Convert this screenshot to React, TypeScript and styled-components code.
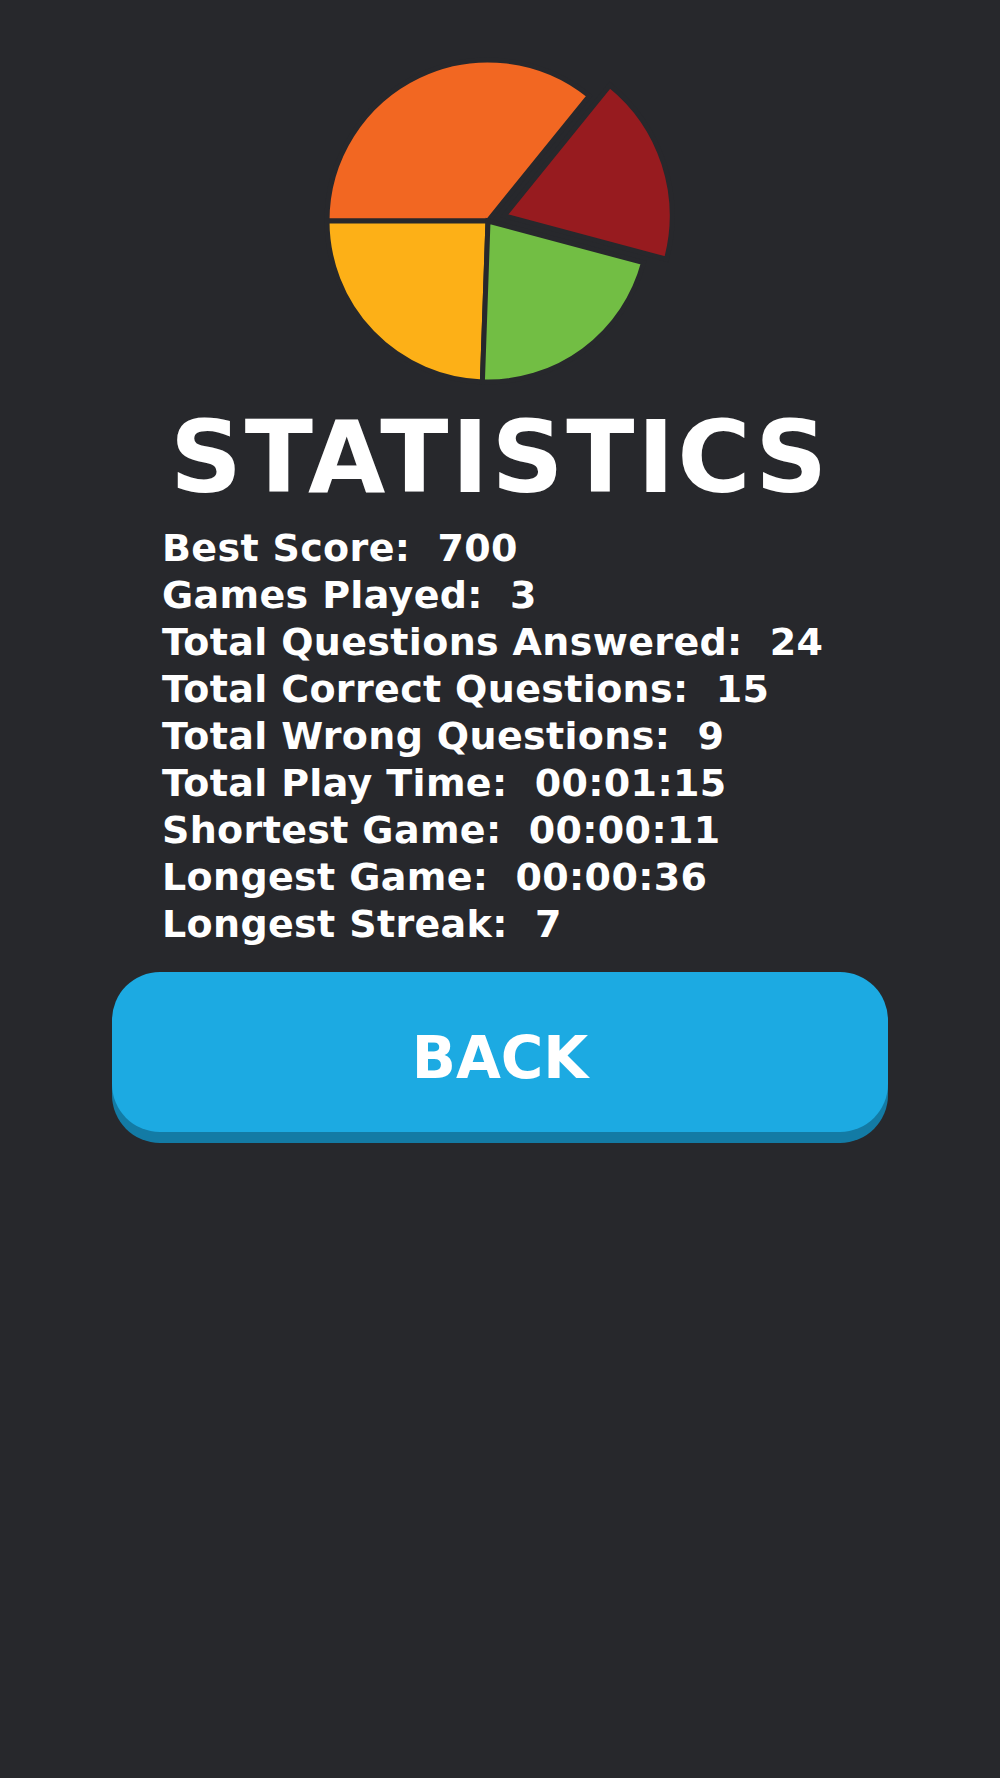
import styled, { createGlobalStyle } from "styled-components";

const GlobalStyle = createGlobalStyle`
	html, body {
		margin: 0;
		padding: 0;
		background: #27282c;
	}
	body {
		font-family: "DejaVu Sans", Verdana, sans-serif;
		color: #ffffff;
	}
`;

type Slice = {
	from: number;
	to: number;
	color: string;
	explode?: number;
	radius?: number;
};

const slices: Slice[] = [
	{ from: 51, to: 180, color: "#f26722" },
	{ from: 180, to: 268, color: "#fdb017" },
	{ from: 268, to: 345, color: "#72be44" },
	{ from: 345, to: 411, color: "#971b1f", explode: 17, radius: 168 },
];

const stats = [
	{ label: "Best Score", value: "700" },
	{ label: "Games Played", value: "3" },
	{ label: "Total Questions Answered", value: "24" },
	{ label: "Total Correct Questions", value: "15" },
	{ label: "Total Wrong Questions", value: "9" },
	{ label: "Total Play Time", value: "00:01:15" },
	{ label: "Shortest Game", value: "00:00:11" },
	{ label: "Longest Game", value: "00:00:36" },
	{ label: "Longest Streak", value: "7" },
];

const CX = 158;
const CY = 160;
const R = 161;

function point(cx: number, cy: number, r: number, angle: number) {
	const rad = (angle * Math.PI) / 180;
	return [cx + r * Math.cos(rad), cy - r * Math.sin(rad)];
}

function slicePath({ from, to, explode = 0, radius = R }: Slice) {
	const mid = ((from + to) / 2) * (Math.PI / 180);
	const cx = CX + explode * Math.cos(mid);
	const cy = CY - explode * Math.sin(mid);
	const [x1, y1] = point(cx, cy, radius, from);
	const [x2, y2] = point(cx, cy, radius, to);
	const large = to - from > 180 ? 1 : 0;
	return `M ${cx} ${cy} L ${x1} ${y1} A ${radius} ${radius} 0 ${large} 0 ${x2} ${y2} Z`;
}

function PieChart() {
	return (
		<Pie viewBox="0 0 340 322" width={340} height={322}>
			{slices.map((slice, index) => (
				<path
					key={`${slice.color}_${index}`}
					d={slicePath(slice)}
					fill={slice.color}
					stroke="#27282c"
					strokeWidth={5}
				/>
			))}
		</Pie>
	);
}

export default function App() {
	return (
		<>
			<GlobalStyle />
			<Screen>
				<PieChart />
				<Title>STATISTICS</Title>
				<Panel>
					<StatList>
						{stats.map((item) => (
							<StatRow key={item.label}>
								{item.label}:&nbsp;&nbsp;{item.value}
							</StatRow>
						))}
					</StatList>
					<BackButton type="button">BACK</BackButton>
				</Panel>
			</Screen>
		</>
	);
}

const Screen = styled.main`
	display: flex;
	flex-direction: column;
	align-items: center;
	min-height: 1778px;
	background: #27282c;
`;

const Pie = styled.svg`
	display: block;
	margin-top: 61px;
	overflow: visible;
`;

const Title = styled.h1`
	margin: 25px 0 17px;
	font-size: 100px;
	line-height: 100px;
	font-weight: 700;
	letter-spacing: 2.8px;
`;

const Panel = styled.section`
	display: flex;
	flex-direction: column;
	width: 776px;
`;

const StatList = styled.ul`
	list-style: none;
	margin: 0;
	padding: 0 0 0 50px;
`;

const StatRow = styled.li`
	font-size: 38px;
	line-height: 47px;
	font-weight: 700;
	letter-spacing: 0.35px;
	white-space: nowrap;
`;

const BackButton = styled.button`
	display: flex;
	align-items: center;
	justify-content: center;
	height: 160px;
	margin-top: 24px;
	padding: 12px 0 0;
	border: none;
	border-radius: 48px;
	background: #1caae2;
	box-shadow: 0 11px 0 #137ba5;
	color: #ffffff;
	font-family: "DejaVu Sans", Verdana, sans-serif;
	font-size: 58px;
	font-weight: 700;
	cursor: pointer;
`;
